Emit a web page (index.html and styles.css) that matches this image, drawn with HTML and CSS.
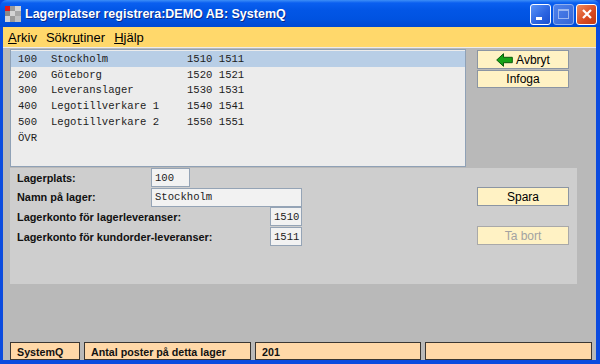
FILE: index.html
```html
<!DOCTYPE html>
<html lang="sv">
<head>
    <meta charset="UTF-8">
    <title>Lagerplatser registrera</title>
    <link rel="stylesheet" href="styles.css">
</head>
<body>
    <div class="window">
        <div class="titlebar">
            <svg class="app-icon" width="16" height="16" viewBox="0 0 16 16">
                <rect x="0" y="0" width="16" height="16" fill="#d4d4d4"/>
                <rect x="5" y="0" width="5" height="5" fill="#9a9a9a"/>
                <rect x="0" y="5" width="5" height="5" fill="#8a8a8a"/>
                <rect x="10" y="5" width="6" height="5" fill="#a8a8a8"/>
                <rect x="5" y="10" width="5" height="6" fill="#9a9a9a"/>
                <rect x="10" y="10" width="6" height="6" fill="#c0c0c0"/>
                <rect x="0" y="0" width="5" height="5" fill="#e01818"/>
            </svg>
            <span class="title">Lagerplatser registrera:DEMO AB: SystemQ</span>
            <div class="wbtns">
                <span class="wbtn min"><i></i></span>
                <span class="wbtn max"><i></i></span>
                <span class="wbtn close">
                    <svg width="12" height="12" viewBox="0 0 12 12"><path d="M2 2 L10 10 M10 2 L2 10" stroke="#fff" stroke-width="2.2"/></svg>
                </span>
            </div>
        </div>
        <div class="frame">
            <div class="menubar">
                <span><u>A</u>rkiv</span>
                <span>Sökr<u>u</u>tiner</span>
                <span><u>H</u>jälp</span>
            </div>
            <div class="content">
                <div class="top">
                    <div class="list">
                        <div class="row selected"><span class="code">100</span><span class="name">Stockholm</span><span>1510 1511</span></div>
                        <div class="row"><span class="code">200</span><span class="name">Göteborg</span><span>1520 1521</span></div>
                        <div class="row"><span class="code">300</span><span class="name">Leveranslager</span><span>1530 1531</span></div>
                        <div class="row"><span class="code">400</span><span class="name">Legotillverkare 1</span><span>1540 1541</span></div>
                        <div class="row"><span class="code">500</span><span class="name">Legotillverkare 2</span><span>1550 1551</span></div>
                        <div class="row"><span class="code">ÖVR</span></div>
                    </div>
                    <div class="side">
                        <button class="btn">
                            <svg width="17" height="14" viewBox="0 0 17 14"><path d="M0.7 7 L7.5 0.7 L7.5 4.3 L16.3 4.3 L16.3 9.7 L7.5 9.7 L7.5 13.3 Z" fill="#17a317" stroke="#0b5c0b" stroke-width="1"/></svg>
                            Avbryt
                        </button>
                        <button class="btn short">Infoga</button>
                    </div>
                </div>
                <div class="panel">
                    <div class="form">
                        <div class="frow"><span class="lbl">Lagerplats:</span><span class="field w-code">100</span></div>
                        <div class="frow"><span class="lbl">Namn på lager:</span><span class="field w-name">Stockholm</span></div>
                        <div class="frow"><span class="lbl wide">Lagerkonto för lagerleveranser:</span><span class="field w-acc">1510</span></div>
                        <div class="frow"><span class="lbl wide">Lagerkonto för kundorder-leveranser:</span><span class="field w-acc">1511</span></div>
                    </div>
                    <div class="side actions">
                        <button class="btn">Spara</button>
                        <button class="btn disabled">Ta bort</button>
                    </div>
                </div>
                <div class="status">
                    <div class="cell c1">SystemQ</div>
                    <div class="cell c2">Antal poster på detta lager</div>
                    <div class="cell c3">201</div>
                    <div class="cell c4"></div>
                </div>
            </div>
        </div>
    </div>
</body>
</html>
```

FILE: styles.css
```css
body {
    margin: 0;
    width: 600px;
    height: 364px;
    overflow: hidden;
    font-family: "Liberation Sans", Arial, sans-serif;
}
.window {
    width: 600px;
    height: 364px;
    display: flex;
    flex-direction: column;
    background: #0b4bdf;
}
.titlebar {
    height: 27px;
    flex: none;
    display: flex;
    align-items: center;
    padding: 0 3px 0 5px;
    border-radius: 7px 7px 0 0;
    background: linear-gradient(#3d8ef7 0px, #0a5ff0 3px, #0256e6 10px, #0052e0 20px, #0049d4 27px);
}
.app-icon {
    flex: none;
    margin-top: 1px;
}
.title {
    margin-left: 4px;
    color: #fff;
    font-size: 12.5px;
    font-weight: bold;
    text-shadow: 1px 1px 0 #0a2a8a;
    flex: 1;
}
.wbtns {
    display: flex;
    gap: 2px;
    margin-top: 1px;
}
.wbtn {
    width: 19px;
    height: 19px;
    border: 1px solid #fff;
    border-radius: 3px;
    background: linear-gradient(135deg, #5a94f8, #2a63e0 60%, #1a4fcf);
    display: flex;
    align-items: center;
    justify-content: center;
}
.wbtn.min i {
    width: 6px;
    height: 3px;
    background: #fff;
    margin: 8px 4px 0 0;
}
.wbtn.max {
    border-color: #8fb0f0;
    background: linear-gradient(135deg, #4e82ec, #3466d8);
}
.wbtn.max i {
    width: 9px;
    height: 7px;
    border: 1px solid #9ab6f0;
    border-top-width: 2px;
}
.wbtn.close {
    background: linear-gradient(135deg, #f08a5c, #d8491f 60%, #c23a12);
}
.frame {
    flex: 1;
    display: flex;
    flex-direction: column;
    border: 4px solid #0b4bdf;
    border-top: none;
    border-left-width: 3px;
}
.menubar {
    height: 20px;
    flex: none;
    background: #ffd86b;
    display: flex;
    align-items: center;
    gap: 9px;
    padding-left: 5px;
    font-size: 13px;
    color: #000;
    border-bottom: 1px solid #ececec;
}
.content {
    flex: 1;
    background: #b9b9b9;
    padding: 1px 0 0 7px;
    display: flex;
    flex-direction: column;
}
.top {
    display: flex;
}
.list {
    width: 454px;
    height: 115px;
    background: #ececec;
    border: 1px solid #8fa1b6;
    padding-top: 1px;
    font-family: "Liberation Mono", "Courier New", monospace;
    font-size: 10.6px;
    color: #1c1c1c;
}
.row {
    height: 15.8px;
    display: flex;
    align-items: center;
    padding-left: 7px;
}
.row.selected {
    background: #b8cee6;
}
.code {
    width: 33px;
}
.name {
    width: 136px;
}
.side {
    width: 92px;
    margin-left: 11px;
    padding-top: 1px;
    display: flex;
    flex-direction: column;
}
.btn {
    height: 19px;
    padding: 0;
    background: #fff2c4;
    border: 1px solid #8b95a3;
    font-family: "Liberation Sans", Arial, sans-serif;
    font-size: 12px;
    color: #000;
    display: flex;
    align-items: center;
    justify-content: center;
    gap: 3px;
}
.btn.short {
    height: 18px;
    margin-top: 1px;
}
.btn.disabled {
    color: #a2a2a2;
    border-color: #a9a9a9;
}
.panel {
    width: 567px;
    height: 116px;
    margin-top: 1px;
    background: #cecece;
    display: flex;
}
.form {
    width: 460px;
    padding-left: 7px;
}
.frow {
    height: 19.6px;
    display: flex;
    align-items: center;
    font-size: 10.9px;
    font-weight: bold;
    color: #111;
}
.lbl {
    width: 134px;
    flex: none;
}
.lbl.wide {
    width: 253px;
}
.field {
    box-sizing: border-box;
    height: 19px;
    background: #f2f2f2;
    border: 1px solid #95a4b6;
    font-family: "Liberation Mono", "Courier New", monospace;
    font-size: 10.6px;
    font-weight: normal;
    color: #1c1c1c;
    display: flex;
    align-items: center;
    padding-left: 3px;
}
.w-code {
    width: 39px;
}
.w-name {
    width: 151px;
}
.w-acc {
    width: 32px;
}
.actions {
    margin-left: 0;
    padding-top: 19px;
    gap: 20px;
}
.status {
    margin-top: auto;
    height: 18px;
    display: flex;
    gap: 4px;
}
.cell {
    box-sizing: border-box;
    height: 18px;
    background: #ffd8a8;
    border: 1px solid #3a3632;
    font-size: 10.7px;
    font-weight: bold;
    color: #111;
    display: flex;
    align-items: center;
    padding: 2px 0 0 6px;
}
.c1 { width: 70px; }
.c2 { width: 167px; }
.c3 { width: 166px; }
.c4 { width: 167px; }
```
